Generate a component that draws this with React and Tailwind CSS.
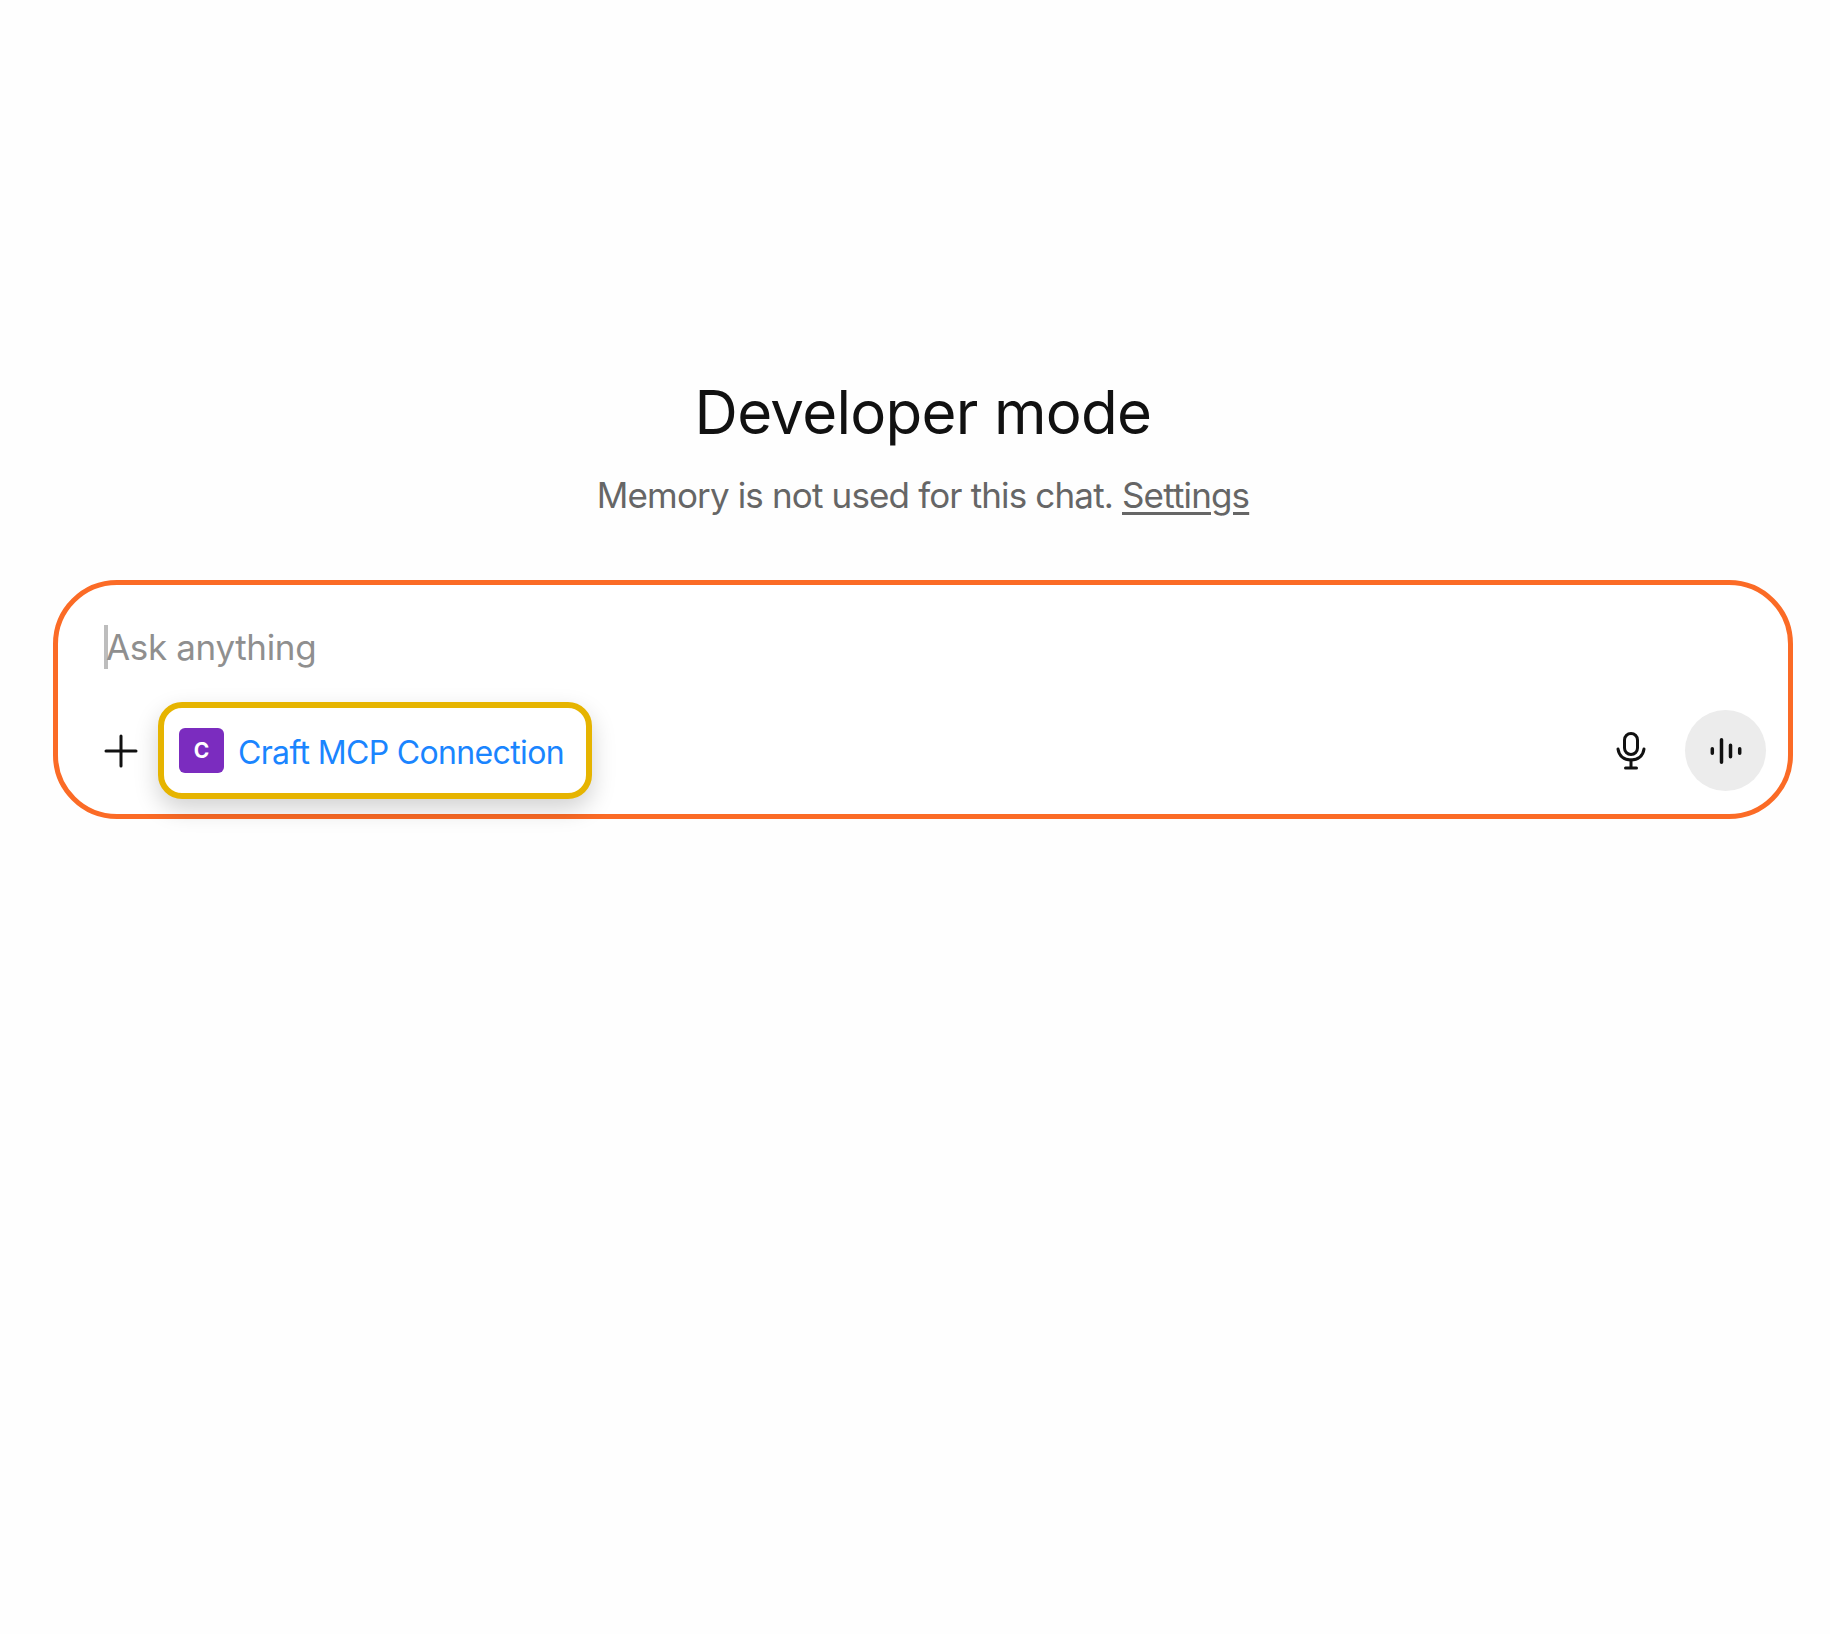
import React from 'react';

const font = "[font-family:Inter,'Liberation_Sans',sans-serif]";

const MicIcon = () => (
  <svg width="32" height="38" viewBox="0 0 32 38" fill="none" stroke="#111" strokeWidth="3" strokeLinecap="round">
    <rect x="9.500" y="1.500" width="13" height="21" rx="6.500" />
    <path d="M3 17c1 7 6 11 13 11s12-4 13-11" />
    <path d="M16 28v7M10.500 36h11" />
  </svg>
);

const WaveIcon = () => (
  <svg width="34" height="34" viewBox="0 0 34 34" fill="none" stroke="#111" strokeWidth="3.500" strokeLinecap="round">
    <path d="M3.300 14.750v4.500M12.500 5.750v22.500M21.500 11.250v11.500M30.700 14.750v4.500" />
  </svg>
);

const App = () => {
  return (
    <div className={`min-h-screen bg-[#fefefe] pt-[378px] pl-[53px] pr-[37px] ${font}`}>
      {/* heading */}
      <div className="flex flex-col items-center">
        <h1 className="text-[60px] leading-[68px] font-normal text-[#111111] tracking-[-0.7px]">Developer mode</h1>
        <p className="mt-[27px] mb-[1px] text-[35px] leading-[44px] text-[#666666] tracking-[-0.85px]">
          Memory is not used for this chat. <span className="underline underline-offset-4">Settings</span>
        </p>
      </div>

      {/* composer */}
      <div className="mt-[62px] h-[239px] rounded-[64px] border-[5px] border-[#fb6b26] bg-white pl-[46px] pr-[22px] pt-[39px]">
        <div className="flex items-center h-[46px]">
          <span className="w-[4px] h-[44px] bg-[#bdbdbd]" />
          <span className="-ml-[2px] text-[35px] leading-[44px] text-[#8f8f8f] tracking-[-0.35px]">Ask anything</span>
        </div>
        <div className="mt-[32px] flex items-center h-[97px]">
          <svg width="34" height="34" viewBox="0 0 34 34" stroke="#111" strokeWidth="3" strokeLinecap="round">
            <path d="M17 2v30M2 17h30" />
          </svg>
          <div className="ml-[20px] flex items-center w-[434px] h-[97px] rounded-[24px] border-[6px] border-[#e6b400] bg-white pl-[15px] shadow-[0_10px_24px_rgba(0,0,0,0.18)]">
            <div className="flex items-center justify-center w-[45px] h-[45px] rounded-[6px] bg-[#7b2cbf] text-white text-[21px] font-bold">C</div>
            <span className="ml-[14px] pt-[4px] text-[32px] text-[#1a85ff] tracking-[-0.65px]">Craft MCP Connection</span>
          </div>
          <div className="ml-auto flex items-center gap-[38px]">
            <MicIcon />
            <div className="flex items-center justify-center w-[81px] h-[81px] rounded-full bg-[#ececec]">
              <WaveIcon />
            </div>
          </div>
        </div>
      </div>
    </div>
  );
};

export default App;
